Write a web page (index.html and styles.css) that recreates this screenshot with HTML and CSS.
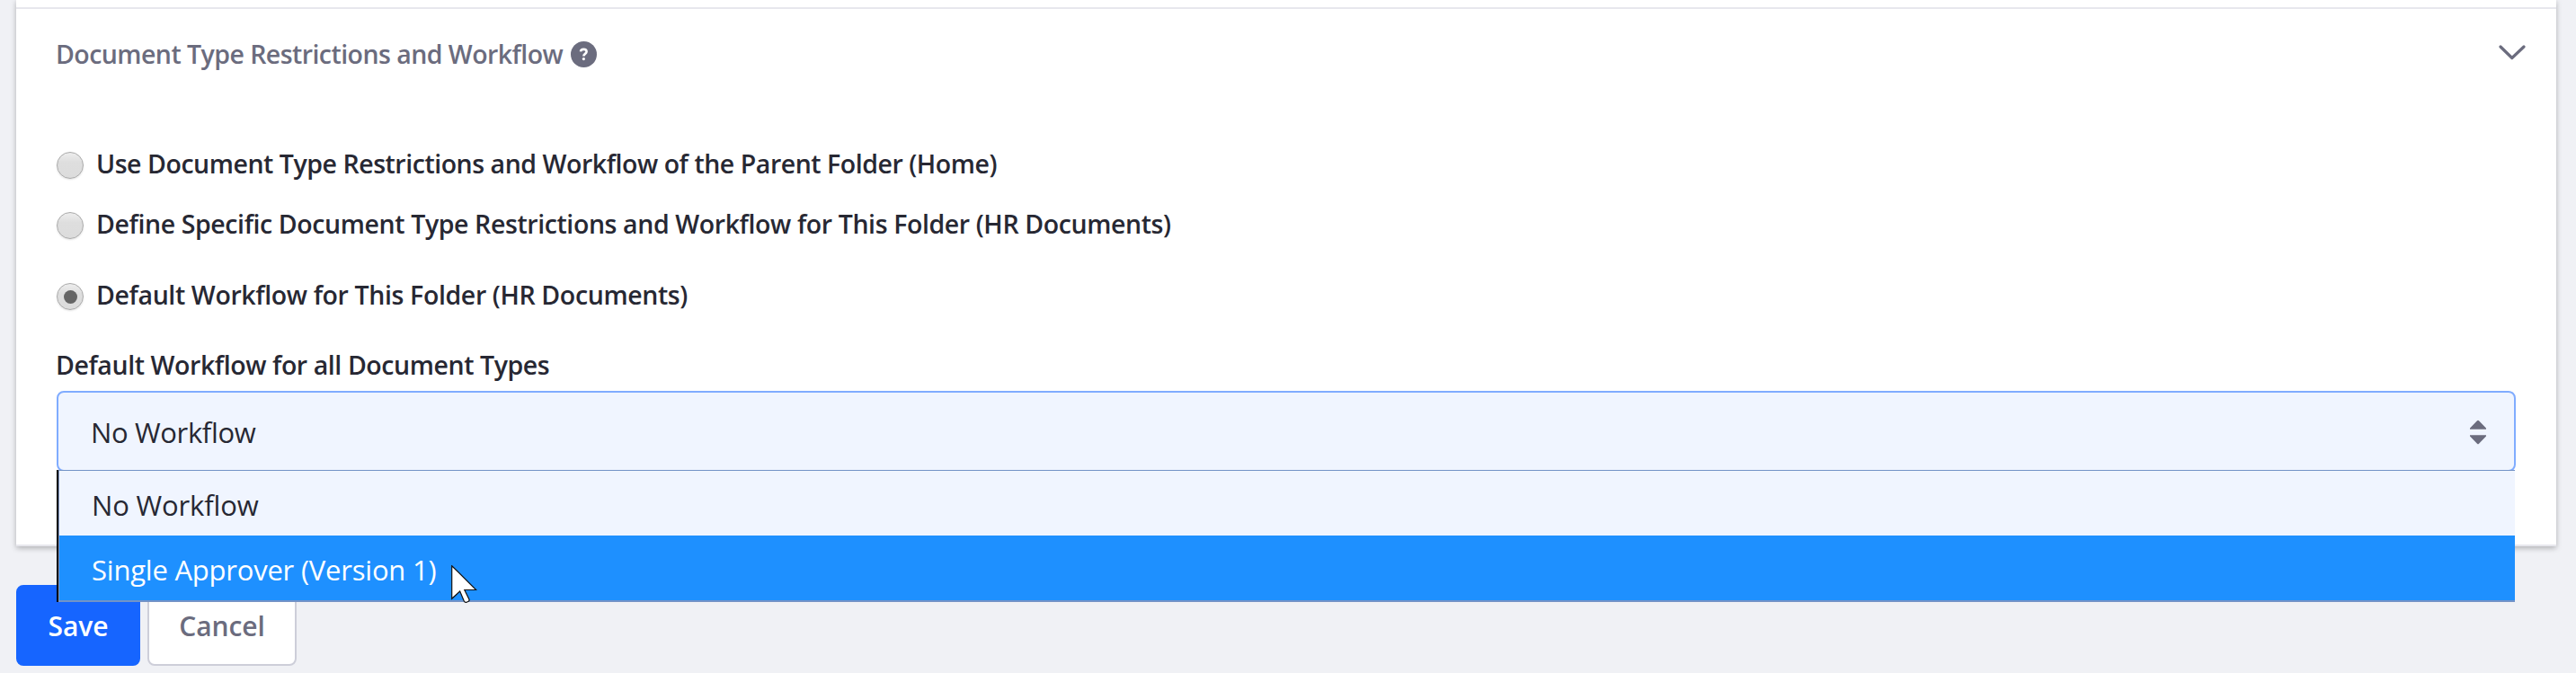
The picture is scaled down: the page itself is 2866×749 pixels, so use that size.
FILE: index.html
```
<!DOCTYPE html>
<html lang="en">
<head>
<meta charset="utf-8">
<title>Folder settings</title>
<link rel="stylesheet" href="styles.css">
</head>
<body>
<main class="page">
  <section class="sheet">
    <header class="panel-header">
      <h2 class="panel-title">Document Type Restrictions and Workflow</h2>
      <svg class="help-icon" viewBox="0 0 29 29"><circle cx="14.5" cy="14.5" r="14.5" fill="#6b6c7e"/><path d="M11 11.400c.2-1.700 1.500-2.500 3.300-2.500 1.900 0 3.300 1 3.300 2.600 0 2.400-3.200 2.400-3.200 5" fill="none" stroke="#fff" stroke-width="2.600"/><circle cx="14.400" cy="19.600" r="1.600" fill="#fff"/></svg>
      <svg class="chevron" viewBox="0 0 30 17"><path d="M2 2l12.800 12.500L28 2" fill="none" stroke="#6b6c7e" stroke-width="3.200" stroke-linecap="round" stroke-linejoin="round"/></svg>
    </header>
    <div class="radios">
      <label class="radio parent"><span class="dot"></span><span>Use Document Type Restrictions and Workflow of the Parent Folder (Home)</span></label>
      <label class="radio specific"><span class="dot"></span><span>Define Specific Document Type Restrictions and Workflow for This Folder (HR Documents)</span></label>
      <label class="radio default"><span class="dot checked"></span><span>Default Workflow for This Folder (HR Documents)</span></label>
    </div>
    <div class="field-label">Default Workflow for all Document Types</div>
    <div class="select">
      <span>No Workflow</span>
      <svg class="carets" viewBox="0 0 18 28"><path d="M0 10.700V9.600L8 1.200q1-1 2 0l8 8.400v1.100zM0 17.300v1.100l8 8.400q1 1 2 0l8-8.400v-1.100z" fill="#6b6c7e"/></svg>
      <div class="menu">
        <div class="option">No Workflow</div>
        <div class="option active">Single Approver (Version 1)</div>
      </div>
    </div>
  </section>
  <div class="actions">
    <button class="btn save">Save</button>
    <button class="btn cancel">Cancel</button>
  </div>
</main>
<svg class="cursor" viewBox="0 0 29 43"><path d="M.7.7v36.600l9-8.300 4.500 10.800q1 2.200 3 1.400l2-1q1.400-.8.600-2.400L14.800 27.500h12.900z" fill="#fff" stroke="#111" stroke-width="1.200"/></svg>
</body>
</html>
```
FILE: styles.css
```
* { box-sizing: border-box; }
body {
  margin: 0;
  height: 749px;
  overflow: hidden;
  background: #f0f1f5;
  color: #272833;
  font-family: "Open Sans", "Noto Sans", sans-serif;
  font-size: 28.5px;
  line-height: 40px;
}
.page { padding: 0 22px 0 18px; }
.sheet {
  height: 608px;
  padding: 8px 45px 0;
  background: #fff;
  border-bottom: 2px solid #e7e7ed;
  box-shadow: 0 2px 6px rgba(0, 0, 0, .28);
}
.panel-header {
  display: flex;
  align-items: flex-start;
  margin: 0 -45px;
  padding: 30px 34px 0 44px;
  height: 154px;
  border-top: 2px solid #e7e7ed;
}
.panel-title {
  margin: 0;
  color: #6b6c7e;
  font-size: 28.5px;
  font-weight: 600;
  letter-spacing: -.55px;
  white-space: nowrap;
}
.help-icon { width: 29px; height: 29px; margin: 6px 0 0 9px; }
.chevron { width: 30px; height: 17px; margin: 10px 0 0 auto; }
.radios, .field-label { font-weight: 600; }
.radio { display: flex; align-items: center; gap: 14px; height: 40px; letter-spacing: -.46px; }
.specific { margin-top: 27px; letter-spacing: -.4px; }
.default { margin-top: 39px; letter-spacing: -.38px; }
.dot {
  display: flex;
  align-items: center;
  justify-content: center;
  width: 30px;
  height: 30px;
  margin-top: 4px;
  border: 1px solid #aaa;
  border-radius: 50%;
  background: linear-gradient(#ededed, #dedede 38%, #dcdcdc);
  box-shadow: 0 1px 2px rgba(0, 0, 0, .12);
}
.checked::after { content: ""; width: 15px; height: 15px; border-radius: 50%; background: #656565; }
.field-label { margin: 38px 0 0 -1px; letter-spacing: -.42px; }
.select {
  position: relative;
  display: flex;
  align-items: center;
  justify-content: space-between;
  width: 2736px;
  height: 90px;
  margin-top: 9px;
  padding: 2px 31px 0 36px;
  border: 2px solid #80acff;
  border-radius: 8px;
  background: #f0f5ff;
  font-size: 31px;
  letter-spacing: -.35px;
}
.carets { width: 18px; height: 28px; margin-top: -1px; }
.menu {
  position: absolute;
  top: 86px;
  left: -2px;
  width: 2735px;
  border: solid #7393c7;
  border-width: 1px 0 2px;
  background: #f0f5ff;
  letter-spacing: -.15px;
  box-shadow: inset 2px 0 #000;
}
.menu::before {
  content: "";
  position: absolute;
  inset: -1px auto -2px 0;
  width: 3px;
  background: linear-gradient(90deg, #000 2px, #8298c4 2px);
}
.option { height: 72px; padding: 3px 0 0 39px; line-height: 71px; }
.active { background: #1e90ff; color: #fff; letter-spacing: -.22px; }
.actions { display: flex; gap: 8px; margin-top: 43px; }
.btn {
  height: 90px;
  padding: 0;
  border: 2px solid #1665ff;
  border-radius: 8px;
  background: #1665ff;
  color: #fff;
  font: 600 30px "Open Sans", sans-serif;
}
.save { width: 138px; }
.cancel { width: 166px; border-color: #cdced9; background: #fff; color: #6b6c7e; letter-spacing: -.1px; }
.cursor { position: absolute; left: 502px; top: 629px; width: 29px; height: 43px; }
```
